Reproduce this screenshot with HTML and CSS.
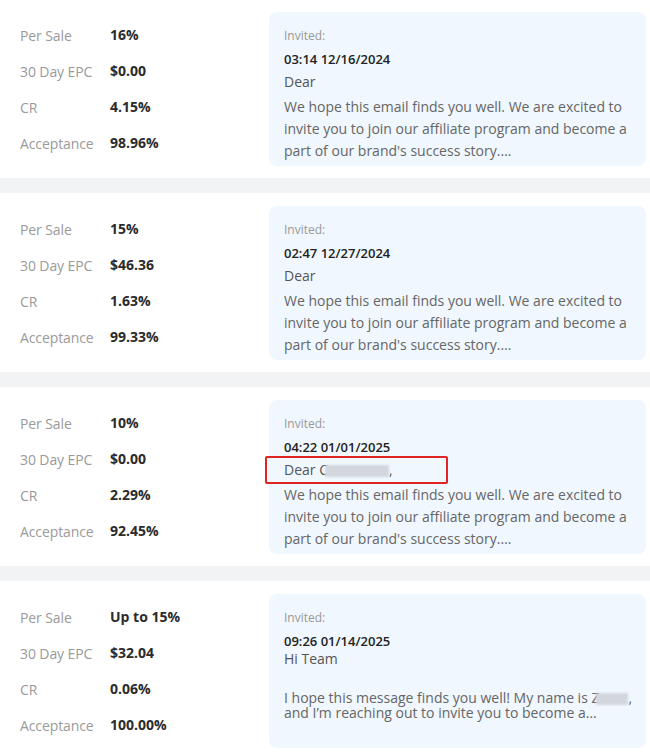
FILE: index.html
```html
<!DOCTYPE html>
<html>
<head>
<meta charset="utf-8">
<link rel="stylesheet" href="styles.css">
</head>
<body>
<div class="list">
  <div class="card">
    <div class="stats">
      <div class="row"><span class="label">Per Sale</span><span class="value">16%</span></div>
      <div class="row"><span class="label">30 Day EPC</span><span class="value">$0.00</span></div>
      <div class="row"><span class="label">CR</span><span class="value">4.15%</span></div>
      <div class="row"><span class="label">Acceptance</span><span class="value">98.96%</span></div>
    </div>
    <div class="invite">
      <div class="inv-label">Invited:</div>
      <div class="inv-date">03:14 12/16/2024</div>
      <div class="inv-greet">Dear</div>
      <div class="inv-body">We hope this email finds you well. We are excited to invite you to join our affiliate program and become a part of our brand's success story.…</div>
    </div>
  </div>
  <div class="card">
    <div class="stats">
      <div class="row"><span class="label">Per Sale</span><span class="value">15%</span></div>
      <div class="row"><span class="label">30 Day EPC</span><span class="value">$46.36</span></div>
      <div class="row"><span class="label">CR</span><span class="value">1.63%</span></div>
      <div class="row"><span class="label">Acceptance</span><span class="value">99.33%</span></div>
    </div>
    <div class="invite">
      <div class="inv-label">Invited:</div>
      <div class="inv-date">02:47 12/27/2024</div>
      <div class="inv-greet">Dear</div>
      <div class="inv-body">We hope this email finds you well. We are excited to invite you to join our affiliate program and become a part of our brand's success story.…</div>
    </div>
  </div>
  <div class="card">
    <div class="stats">
      <div class="row"><span class="label">Per Sale</span><span class="value">10%</span></div>
      <div class="row"><span class="label">30 Day EPC</span><span class="value">$0.00</span></div>
      <div class="row"><span class="label">CR</span><span class="value">2.29%</span></div>
      <div class="row"><span class="label">Acceptance</span><span class="value">92.45%</span></div>
    </div>
    <div class="invite">
      <div class="inv-label">Invited:</div>
      <div class="inv-date">04:22 01/01/2025</div>
      <div class="inv-greet marked">Dear C<span class="blur blur-name"></span>,</div>
      <div class="inv-body">We hope this email finds you well. We are excited to invite you to join our affiliate program and become a part of our brand's success story.…</div>
    </div>
  </div>
  <div class="card">
    <div class="stats">
      <div class="row"><span class="label">Per Sale</span><span class="value">Up to 15%</span></div>
      <div class="row"><span class="label">30 Day EPC</span><span class="value">$32.04</span></div>
      <div class="row"><span class="label">CR</span><span class="value">0.06%</span></div>
      <div class="row"><span class="label">Acceptance</span><span class="value">100.00%</span></div>
    </div>
    <div class="invite">
      <div class="inv-label">Invited:</div>
      <div class="inv-date">09:26 01/14/2025</div>
      <div class="inv-greet tight">Hi Team</div>
      <div class="inv-body tight-body">I hope this message finds you well! My name is Z<span class="blur blur-z"></span>, and I’m reaching out to invite you to become a…</div>
    </div>
  </div>
</div>
</body>
</html>
```

FILE: styles.css
```css
* { box-sizing: border-box; }
html, body { margin: 0; padding: 0; background: #f2f3f5; }
body {
  font-family: "Open Sans", "Noto Sans", sans-serif;
  width: 650px;
  height: 753px;
  overflow: hidden;
}
.list {
  display: flex;
  flex-direction: column;
  gap: 15px;
  margin-top: -1px;
}
.card {
  background: #fff;
  display: flex;
  align-items: flex-start;
  padding: 13px 4px 12px 20px;
  height: 179px;
}
.stats {
  width: 249px;
  flex: none;
  align-self: center;
  display: flex;
  flex-direction: column;
}
.row {
  display: flex;
  align-items: center;
  height: 36px;
}
.label {
  width: 90px;
  font-size: 14px;
  color: #9a9a9a;
  letter-spacing: -0.1px;
}
.value {
  font-size: 14px;
  font-weight: 700;
  color: #2b2b2b;
  margin-top: -2px;
}
.invite {
  flex: 1;
  height: 154px;
  background: #f0f7fe;
  border-radius: 8px;
  padding: 15px 4px 0 15px;
}
.inv-label {
  font-size: 12px;
  color: #999;
  line-height: 18px;
}
.inv-date {
  margin-top: 5px;
  font-size: 13px;
  font-weight: 600;
  color: #222;
  line-height: 18px;
}
.inv-greet {
  font-size: 14px;
  color: #555;
  line-height: 22px;
  margin-top: 3px;
}
.inv-greet.tight { line-height: 18px; margin-top: 0; }
.inv-body {
  font-size: 14px;
  color: #666;
  line-height: 22px;
  margin-top: 3px;
  padding-right: 6px;
}
.inv-body.tight-body {
  margin-top: 22px;
  line-height: 15px;
  padding-right: 0;
}
.marked { position: relative; }
.marked::after {
  content: "";
  position: absolute;
  left: -19px;
  top: -3px;
  width: 179px;
  height: 24px;
  border: 2px solid #e02424;
  border-radius: 2px;
}
.blur {
  display: inline-block;
  background: #d3d7dd;
  filter: blur(1.2px);
  vertical-align: middle;
}
.blur-name { width: 64px; height: 12px; margin-left: -3px; }
.blur-z { width: 32px; height: 12px; margin-left: -3px; }
```
